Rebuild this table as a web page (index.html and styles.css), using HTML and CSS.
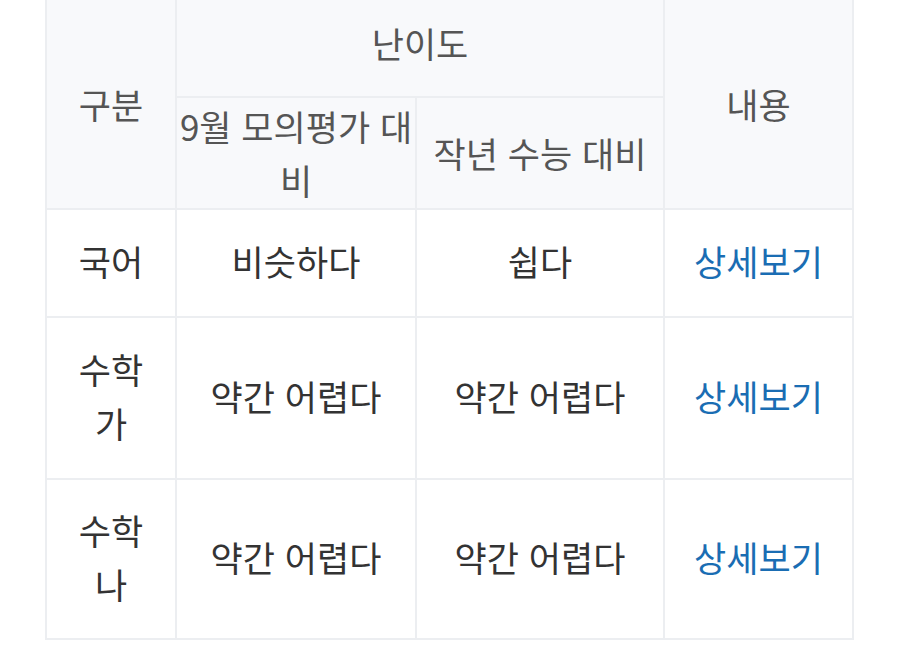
FILE: index.html
```html
<!DOCTYPE html>
<html lang="ko">
<head>
<meta charset="utf-8">
<link rel="stylesheet" href="styles.css">
</head>
<body>
<table class="grade">
  <colgroup>
    <col class="c1"><col class="c2"><col class="c3"><col class="c4">
  </colgroup>
  <thead>
    <tr class="h1">
      <th class="span" rowspan="2">구분</th>
      <th colspan="2">난이도</th>
      <th class="span" rowspan="2">내용</th>
    </tr>
    <tr class="h2">
      <th class="sub">9월 모의평가 대비</th>
      <th class="sub">작년 수능 대비</th>
    </tr>
  </thead>
  <tbody>
    <tr class="r1">
      <td>국어</td>
      <td>비슷하다</td>
      <td>쉽다</td>
      <td><a class="more" href="#">상세보기</a></td>
    </tr>
    <tr class="r2">
      <td class="subj">수학<br>가</td>
      <td>약간 어렵다</td>
      <td>약간 어렵다</td>
      <td><a class="more" href="#">상세보기</a></td>
    </tr>
    <tr class="r3">
      <td class="subj">수학<br>나</td>
      <td>약간 어렵다</td>
      <td>약간 어렵다</td>
      <td><a class="more" href="#">상세보기</a></td>
    </tr>
  </tbody>
</table>
</body>
</html>
```

FILE: styles.css
```css
html, body {
  margin: 0;
  padding: 0;
  background: #ffffff;
}

body {
  font-family: "Noto Sans CJK KR", "Noto Sans", sans-serif;
}

.grade {
  border-collapse: collapse;
  table-layout: fixed;
  width: 808px;
  margin: -7px 0 0 45px;
  font-size: 35px;
  line-height: 54px;
}

.c1 { width: 130px; }
.c2 { width: 240px; }
.c3 { width: 248px; }
.c4 { width: 189px; }

.grade th,
.grade td {
  border: 2px solid #eceef1;
  padding: 0 1px;
  text-align: center;
  vertical-align: middle;
}

.grade th {
  background: #f8f9fb;
  color: #555555;
  font-weight: 400;
}

.grade td {
  color: #333333;
  background: #ffffff;
  padding-bottom: 4px;
}

.h1 { height: 103px; }
.h1 th { padding-bottom: 6px; }
.h1 th.span { padding-top: 4px; padding-bottom: 0; }
.h2 { height: 112px; }
.r1 { height: 108px; }
.r2 { height: 162px; }
.r3 { height: 160px; }

.more {
  color: #1a6db3;
  text-decoration: none;
}
```
